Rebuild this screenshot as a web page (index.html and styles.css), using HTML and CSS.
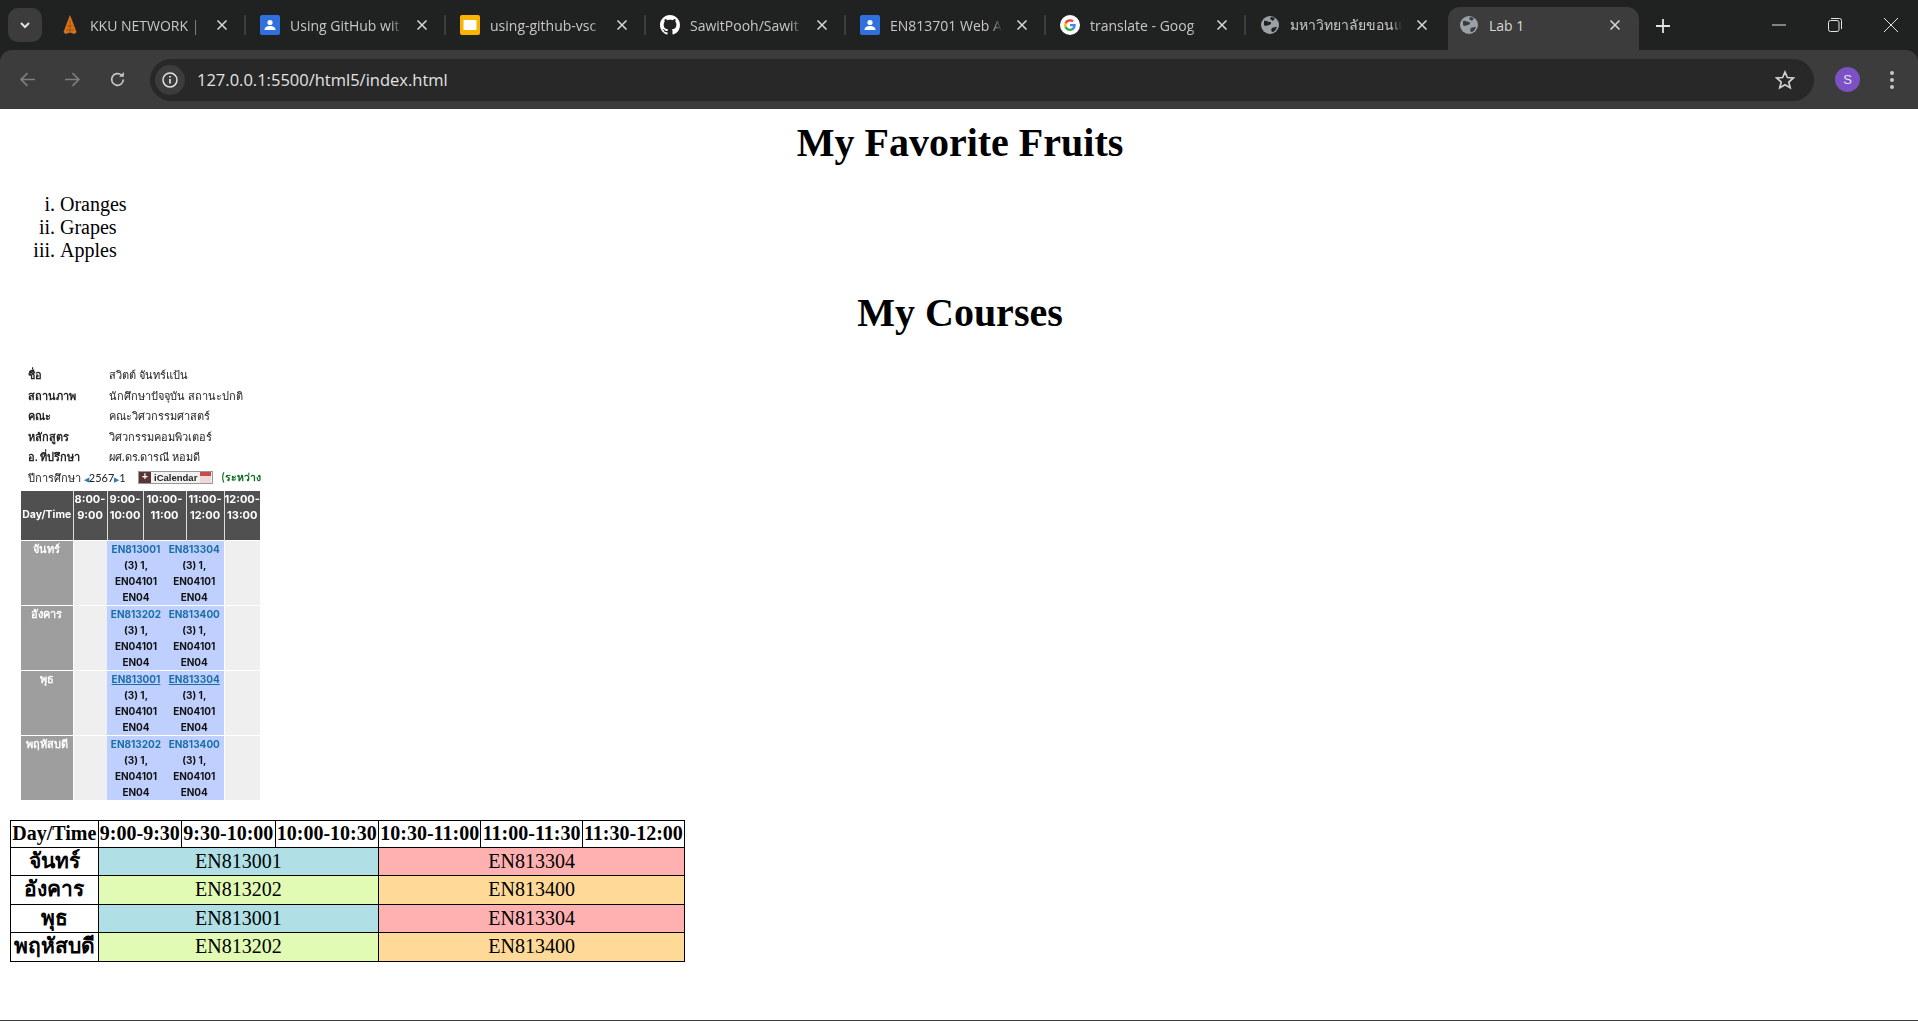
FILE: index.html
```html
<!DOCTYPE html>
<html>
<head>
	<meta charset="utf-8">
	<title>Lab 1</title>
	<link rel="stylesheet" href="styles.css">
</head>
<body>
	<div class="browser-top">
		<div class="tabstrip">
			<div class="tab-search"><svg width="12" height="12" viewBox="0 0 12 12"><path d="M2 4l4 4 4-4" fill="none" stroke="#e3e3e3" stroke-width="2"/></svg></div>
			<div class="tab"><svg class="fav" viewBox="0 0 20 20"><path d="M10 0l3.500 9 3 8-2 2-4.500-1.500L5.500 19l-2-2 3-8z" fill="#d9731a"/><path d="M10 5v12M7 11h6M6 15h8" stroke="#8f4a10" fill="none" stroke-width="0.800"/></svg><span class="tab-title">KKU NETWORK |</span><svg class="tab-x" viewBox="0 0 12 12"><path d="M1.500 1.500l9 9M10.500 1.500l-9 9"/></svg></div>
			<div class="tab"><svg class="fav" viewBox="0 0 20 20"><rect width="20" height="20" rx="2" fill="#2f6fde"/><circle cx="10" cy="7.500" r="2.600" fill="#fff"/><path d="M4.500 15c0-3 2.500-4 5.500-4s5.500 1 5.500 4z" fill="#fff"/></svg><span class="tab-title">Using GitHub wit</span><svg class="tab-x" viewBox="0 0 12 12"><path d="M1.500 1.500l9 9M10.500 1.500l-9 9"/></svg></div>
			<div class="tab"><svg class="fav" viewBox="0 0 20 20"><rect width="20" height="20" rx="2" fill="#f9b300"/><rect x="3.500" y="5" width="13" height="10" fill="#fff"/></svg><span class="tab-title">using-github-vsc</span><svg class="tab-x" viewBox="0 0 12 12"><path d="M1.500 1.500l9 9M10.500 1.500l-9 9"/></svg></div>
			<div class="tab"><svg class="fav" viewBox="0 0 16 16"><path fill="#fff" d="M8 0C3.580 0 0 3.580 0 8c0 3.540 2.290 6.530 5.470 7.590.4.070.55-.17.55-.38 0-.19-.01-.82-.01-1.490-2.010.37-2.530-.49-2.690-.94-.09-.23-.48-.94-.82-1.130-.28-.15-.68-.52-.01-.53.630-.01 1.080.58 1.230.82.720 1.210 1.870.87 2.330.66.070-.52.280-.87.510-1.070-1.780-.2-3.640-.89-3.640-3.950 0-.87.310-1.590.820-2.150-.08-.2-.36-1.020.08-2.120 0 0 .67-.21 2.200.82.640-.18 1.320-.27 2-.27s1.360.09 2 .27c1.530-1.040 2.200-.82 2.200-.82.440 1.100.160 1.920.080 2.120.510.560.820 1.270.820 2.150 0 3.070-1.870 3.750-3.650 3.950.290.250.540.730.540 1.480 0 1.070-.01 1.930-.01 2.200 0 .210.150.460.550.380A8.010 8.010 0 0016 8c0-4.420-3.580-8-8-8z"/></svg><span class="tab-title">SawitPooh/Sawit</span><svg class="tab-x" viewBox="0 0 12 12"><path d="M1.500 1.500l9 9M10.500 1.500l-9 9"/></svg></div>
			<div class="tab"><svg class="fav" viewBox="0 0 20 20"><rect width="20" height="20" rx="2" fill="#2f6fde"/><circle cx="10" cy="7.500" r="2.600" fill="#fff"/><path d="M4.500 15c0-3 2.500-4 5.500-4s5.500 1 5.500 4z" fill="#fff"/></svg><span class="tab-title">EN813701 Web A</span><svg class="tab-x" viewBox="0 0 12 12"><path d="M1.500 1.500l9 9M10.500 1.500l-9 9"/></svg></div>
			<div class="tab"><svg class="fav" viewBox="0 0 20 20"><circle cx="10" cy="10" r="10" fill="#fff"/><path d="M15.700 10.200c0-.4 0-.8-.1-1.200H10v2.300h3.200a2.700 2.700 0 01-1.200 1.800v1.500h1.900c1.100-1 1.800-2.600 1.800-4.400z" fill="#4285f4"/><path d="M10 16c1.600 0 3-.5 3.900-1.400L12 13.100c-.5.400-1.200.6-2 .6-1.500 0-2.900-1-3.300-2.500H4.700v1.500C5.700 14.700 7.700 16 10 16z" fill="#34a853"/><path d="M6.700 11.200a3.600 3.600 0 010-2.400V7.300h-2a6 6 0 000 5.400z" fill="#fbbc05"/><path d="M10 6.400c.900 0 1.600.3 2.200.9l1.700-1.700A6 6 0 004.700 7.300l2 1.500C7.100 7.400 8.500 6.400 10 6.400z" fill="#ea4335"/></svg><span class="tab-title">translate - Goog</span><svg class="tab-x" viewBox="0 0 12 12"><path d="M1.500 1.500l9 9M10.500 1.500l-9 9"/></svg></div>
			<div class="tab"><svg class="fav" viewBox="0 0 20 20"><circle cx="10" cy="10" r="9" fill="#9aa0a6"/><path d="M4 6c3-1 4 1 6 1s1 3-1 3-3 2-5 0zM12 13c2-1 4-1 5-1-1 3-3 5-5 5-1-1-1-3 0-4zM11 2l4 1-2 3-3-2z" fill="#202124"/></svg><span class="tab-title">มหาวิทยาลัยขอนแ</span><svg class="tab-x" viewBox="0 0 12 12"><path d="M1.500 1.500l9 9M10.500 1.500l-9 9"/></svg></div>
			<div class="tab tab-active"><svg class="fav" viewBox="0 0 20 20"><circle cx="10" cy="10" r="9" fill="#9aa0a6"/><path d="M4 6c3-1 4 1 6 1s1 3-1 3-3 2-5 0zM12 13c2-1 4-1 5-1-1 3-3 5-5 5-1-1-1-3 0-4zM11 2l4 1-2 3-3-2z" fill="#3c3c3c"/></svg><span class="tab-title">Lab 1</span><svg class="tab-x" viewBox="0 0 12 12"><path d="M1.500 1.500l9 9M10.500 1.500l-9 9"/></svg></div>
			<div class="tab-new"><svg width="14" height="14" viewBox="0 0 14 14"><path d="M7 0v14M0 7h14" stroke="#e3e3e3" stroke-width="1.800"/></svg></div>
			<div class="win-buttons">
				<svg width="14" height="14" viewBox="0 0 14 14"><path d="M0 7h14" stroke="#e3e3e3" stroke-width="1"/></svg>
				<svg width="14" height="14" viewBox="0 0 14 14"><rect x="0.500" y="2.500" width="10.500" height="11" rx="2" fill="none" stroke="#e3e3e3"/><path d="M3 .5h8.500a2 2 0 012 2V11" fill="none" stroke="#e3e3e3"/></svg>
				<svg width="14" height="14" viewBox="0 0 14 14"><path d="M0 0l14 14M14 0L0 14" stroke="#e3e3e3" stroke-width="1"/></svg>
			</div>
		</div>
		<div class="toolbar">
			<svg class="nav-icon" viewBox="0 0 16 16"><path d="M15 8H2M8 2L2 8l6 6" fill="none" stroke="#7d7e7e" stroke-width="1.600"/></svg>
			<svg class="nav-icon" viewBox="0 0 16 16"><path d="M1 8h13M8 2l6 6-6 6" fill="none" stroke="#7d7e7e" stroke-width="1.600"/></svg>
			<svg class="nav-icon" viewBox="0 0 16 16"><path d="M13.500 8a5.500 5.500 0 11-1.700-4" fill="none" stroke="#c7c7c7" stroke-width="1.600"/><path d="M14 1v4.500H9.500z" fill="#c7c7c7"/></svg>
			<div class="omnibox">
				<div class="site-info"><svg width="16" height="16" viewBox="0 0 16 16"><circle cx="8" cy="8" r="7" fill="none" stroke="#e3e3e3" stroke-width="1.500"/><path d="M8 7v4.500M8 4v1.500" stroke="#e3e3e3" stroke-width="1.700"/></svg></div>
				<span class="url">127.0.0.1:5500/html5/index.html</span>
				<svg class="star" viewBox="0 0 20 20"><path d="M10 2l2.400 5.500 6 .5-4.600 4 1.400 5.800L10 14.800l-5.200 3 1.400-5.800-4.600-4 6-.5z" fill="none" stroke="#d0d0d0" stroke-width="1.700"/></svg>
			</div>
			<div class="avatar">S</div>
			<div class="menu-dots"><i></i><i></i><i></i></div>
		</div>
	</div>

	<div class="page">
		<h1>My Favorite Fruits</h1>
		<ol class="fruits" type="i">
			<li>Oranges</li>
			<li>Grapes</li>
			<li>Apples</li>
		</ol>
		<h1>My Courses</h1>

		<div class="shot">
			<div class="shot-info"><b>ชื่อ</b><span>สวิตต์ จันทร์แป้น</span></div>
			<div class="shot-info"><b>สถานภาพ</b><span>นักศึกษาปัจจุบัน สถานะปกติ</span></div>
			<div class="shot-info"><b>คณะ</b><span>คณะวิศวกรรมศาสตร์</span></div>
			<div class="shot-info"><b>หลักสูตร</b><span>วิศวกรรมคอมพิวเตอร์</span></div>
			<div class="shot-info"><b>อ. ที่ปรึกษา</b><span>ผศ.ดร.ดารณี หอมดี</span></div>
			<div class="shot-year">
				<span>ปีการศึกษา <i class="arr">◀</i>2567<i class="arr">▶</i>1</span>
				<span class="ical"><em>+</em>iCalendar<u></u></span>
				<span class="term">(ระหว่าง</span>
			</div>
			<table class="shot-table">
				<colgroup>
					<col class="c1"><col class="c2"><col class="c3"><col class="c4"><col class="c5"><col class="c6"><col class="c7">
				</colgroup>
				<tr class="shot-head">
					<th>Day/Time</th><th>8:00-<br>9:00</th><th>9:00-<br>10:00</th><th colspan="2">10:00-<br>11:00</th><th>11:00-<br>12:00</th><th>12:00-<br>13:00</th>
				</tr>
				<tr>
					<td class="day">จันทร์</td><td class="empty"></td>
					<td class="course" colspan="2"><a>EN813001</a><br>(3) 1,<br>EN04101<br>EN04</td>
					<td class="course" colspan="2"><a>EN813304</a><br>(3) 1,<br>EN04101<br>EN04</td><td class="empty"></td>
				</tr>
				<tr>
					<td class="day">อังคาร</td><td class="empty"></td>
					<td class="course" colspan="2"><a>EN813202</a><br>(3) 1,<br>EN04101<br>EN04</td>
					<td class="course" colspan="2"><a>EN813400</a><br>(3) 1,<br>EN04101<br>EN04</td><td class="empty"></td>
				</tr>
				<tr>
					<td class="day">พุธ</td><td class="empty"></td>
					<td class="course" colspan="2"><a class="under">EN813001</a><br>(3) 1,<br>EN04101<br>EN04</td>
					<td class="course" colspan="2"><a class="under">EN813304</a><br>(3) 1,<br>EN04101<br>EN04</td><td class="empty"></td>
				</tr>
				<tr>
					<td class="day">พฤหัสบดี</td><td class="empty"></td>
					<td class="course" colspan="2"><a>EN813202</a><br>(3) 1,<br>EN04101<br>EN04</td>
					<td class="course" colspan="2"><a>EN813400</a><br>(3) 1,<br>EN04101<br>EN04</td><td class="empty"></td>
				</tr>
			</table>
		</div>

		<table class="timetable">
			<tr>
				<th>Day/Time</th><th>9:00-9:30</th><th>9:30-10:00</th><th>10:00-10:30</th><th>10:30-11:00</th><th>11:00-11:30</th><th>11:30-12:00</th>
			</tr>
			<tr>
				<th class="thai">จันทร์</th><td class="blue" colspan="3">EN813001</td><td class="pink" colspan="3">EN813304</td>
			</tr>
			<tr>
				<th class="thai">อังคาร</th><td class="lime" colspan="3">EN813202</td><td class="orange" colspan="3">EN813400</td>
			</tr>
			<tr>
				<th class="thai">พุธ</th><td class="blue" colspan="3">EN813001</td><td class="pink" colspan="3">EN813304</td>
			</tr>
			<tr>
				<th class="thai">พฤหัสบดี</th><td class="lime" colspan="3">EN813202</td><td class="orange" colspan="3">EN813400</td>
			</tr>
		</table>
	</div>
	<div class="bottom-line"></div>
</body>
</html>
```
FILE: styles.css
```css
html, body{
	margin: 0;
	height: 100%;
}
body{
	display: flex;
	flex-direction: column;
	height: 1021px;
	overflow: hidden;
	background: white;
	font-family: "Liberation Serif", "Noto Sans", serif;
}

/* browser chrome */
.browser-top{
	background: #202222;
	font-family: "Open Sans", "Noto Sans", sans-serif;
	color: #c7c7c7;
}
.tabstrip{
	display: flex;
	align-items: flex-end;
	height: 50px;
}
.tab-search{
	width: 34px;
	height: 34px;
	margin: 0 4px 8px 8px;
	border-radius: 10px;
	background: #3c3c3c;
	display: flex;
	align-items: center;
	justify-content: center;
}
.tab{
	width: 200px;
	height: 43px;
	box-sizing: border-box;
	padding: 0 18px 7px 14px;
	display: flex;
	align-items: center;
	position: relative;
	font-size: 14px;
}
.tab::after{
	content: "";
	position: absolute;
	right: 0;
	top: 8px;
	height: 20px;
	width: 2px;
	background: #3c3c3c;
}
.tab-active::after, .tab:nth-child(8)::after{
	display: none;
}
.tab-active{
	width: 191px;
	padding-left: 11px;
	background: #3c3c3c;
	border-radius: 12px 12px 0 0;
	color: #d8d8d8;
	margin-left: 2px;
}
.fav{
	width: 20px;
	height: 20px;
	flex: none;
	margin-right: 10px;
}
.tab-title{
	flex: 1;
	white-space: nowrap;
	-webkit-mask-image: linear-gradient(to right, black 80%, transparent 112px);
	mask-image: linear-gradient(to right, black 80%, transparent 112px);
}
.tab-active .tab-title{
	-webkit-mask-image: none;
	mask-image: none;
}
.tab-x{
	width: 12px;
	height: 12px;
	flex: none;
	fill: none;
	stroke: #d8d8d8;
	stroke-width: 1.500;
}
.tab-new{
	width: 14px;
	height: 14px;
	margin: 0 0 20px 17px;
}
.win-buttons{
	margin-left: auto;
	display: flex;
	gap: 42px;
	padding-right: 20px;
	margin-bottom: 18px;
}
.toolbar{
	height: 59px;
	background: #3c3c3c;
	border-radius: 12px 12px 0 0;
	display: flex;
	align-items: center;
	box-sizing: border-box;
	padding: 0 24px 0 19px;
}
.nav-icon{
	width: 17px;
	height: 17px;
	margin-right: 28px;
}
.nav-icon:nth-child(3){
	margin-right: 0;
}
.omnibox{
	flex: 1;
	height: 42px;
	margin-left: 24px;
	border-radius: 21px;
	background: #282828;
	display: flex;
	align-items: center;
	color: #e3e3e3;
	font-size: 16.500px;
}
.site-info{
	width: 30px;
	height: 30px;
	margin-left: 5px;
	border-radius: 50%;
	background: #3c3c3c;
	display: flex;
	align-items: center;
	justify-content: center;
}
.url{
	margin-left: 12px;
	font-family: "Open Sans", sans-serif;
}
.star{
	width: 20px;
	height: 20px;
	margin-left: auto;
	margin-right: 19px;
}
.avatar{
	width: 25px;
	height: 25px;
	margin-left: 21px;
	border-radius: 50%;
	background: #7b52c4;
	color: #e8e0f7;
	font: 13px "Liberation Sans", sans-serif;
	display: flex;
	align-items: center;
	justify-content: center;
}
.menu-dots{
	margin-left: 30px;
	display: flex;
	flex-direction: column;
	gap: 3px;
}
.menu-dots i{
	width: 4px;
	height: 4px;
	border-radius: 50%;
	background: #c7c7c7;
}

/* page */
.page{
	flex: 1;
	padding: 11px 10px 0;
	min-height: 0;
}
h1{
	font-size: 40px;
	text-align: center;
	margin: 0 0 27px;
	padding-left: 2px;
	line-height: 46px;
}
.fruits{
	font-size: 20px;
	line-height: 23px;
	margin: 0 0 28px;
	padding-left: 50px;
}

/* picture of the reg page */
.shot{
	width: 240px;
	height: 438px;
	margin: 0 0 19px 11px;
	padding-top: 2px;
	box-sizing: border-box;
	font-family: "Lato", "Noto Sans", sans-serif;
	font-size: 11px;
	color: #222;
	overflow: hidden;
	filter: blur(0.4px);
}
.shot-info{
	display: flex;
	height: 20.500px;
	align-items: center;
	padding-left: 7px;
}
.shot-info b{
	width: 81px;
	flex: none;
}
.shot-year{
	display: flex;
	align-items: center;
	height: 20px;
	padding-left: 7px;
	white-space: nowrap;
}
.arr{
	font-style: normal;
	font-size: 7px;
	color: #2a7fb0;
}
.ical{
	display: flex;
	align-items: center;
	gap: 3px;
	width: 75px;
	height: 13px;
	box-sizing: border-box;
	margin-left: 12px;
	background: #f1f1f1;
	border: 1px solid #999;
	font: bold 9.500px "Liberation Sans", sans-serif;
	color: #222;
}
.ical em{
	width: 13px;
	height: 11px;
	background: #5b3434;
	color: white;
	font-style: normal;
	font-size: 10px;
	line-height: 10px;
	text-align: center;
}
.ical u{
	width: 11px;
	height: 11px;
	background: linear-gradient(#c84a4a 40%, #f0d8d8 40%);
	margin-left: auto;
	margin-right: 1px;
}
.term{
	margin-left: 9px;
	color: #0b6b1f;
	font-size: 10.500px;
	font-weight: bold;
}
.shot-table{
	border-collapse: collapse;
	table-layout: fixed;
	width: 239px;
	margin-top: 3px;
	font-family: "Inter", "Noto Sans", sans-serif;
	font-weight: 700;
	font-size: 10px;
	line-height: 16px;
}
.c1{width: 52px;}
.c2{width: 34px;}
.c3{width: 36px;}
.c4{width: 22px;}
.c5{width: 21px;}
.c6{width: 38px;}
.c7{width: 36px;}
.shot-table th{
	height: 49px;
	padding: 0;
	background: #505050;
	color: white;
	border-left: 1.500px solid #ddd;
	font-weight: 700;
	font-size: 11px;
	vertical-align: top;
	white-space: nowrap;
}
.shot-table th:first-child{
	border-left: 0;
	font-size: 10.500px;
	vertical-align: middle;
}
.shot-table td{
	padding: 0;
	height: 64px;
	vertical-align: top;
	text-align: center;
	border-top: 1.500px solid white;
}
.shot-table .day{
	background: #9e9e9e;
	color: white;
	font-family: "Noto Sans", sans-serif;
	font-size: 11px;
	font-weight: bold;
}
.shot-table .empty{
	background: #efefef;
	border-left: 1.500px solid white;
}
.shot-table .course{
	background: #bfd0ff;
	color: #111;
	white-space: nowrap;
}
.shot-table a{
	color: #1a6ea8;
}
.shot-table .under{
	text-decoration: underline;
}

/* timetable */
.timetable{
	border-collapse: collapse;
	font-size: 20px;
	line-height: 23px;
}
.timetable th, .timetable td{
	border: 1.250px solid black;
	padding: 1.250px;
	text-align: center;
}
.timetable .thai{
	font-family: "Liberation Serif", "Noto Sans", "DejaVu Sans", serif;
	font-size: 21px;
	height: 25px;
	white-space: nowrap;
}
.blue{background: #b0e0e6;}
.pink{background: #ffb0b0;}
.lime{background: #e1fab4;}
.orange{background: #ffd997;}

.bottom-line{
	height: 1px;
	background: #3c3c3c;
	flex: none;
}
```
